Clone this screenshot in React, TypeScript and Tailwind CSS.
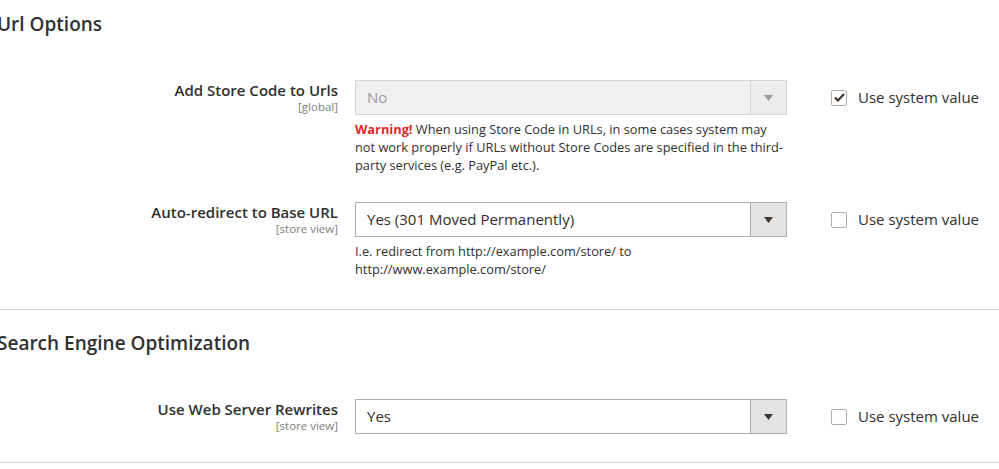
import React from "react";

type RowProps = {
  label: string;
  scope: string;
  value: string;
  disabled?: boolean;
  checked?: boolean;
  note?: React.ReactNode;
};

function Arrow({ muted }: { muted?: boolean }) {
  return (
    <svg width="9" height="6" viewBox="0 0 9 6">
      <path d="M0 0H9L4.5 6Z" fill={muted ? "#9a9a9a" : "#41362f"} />
    </svg>
  );
}

function Row({ label, scope, value, disabled, checked, note }: RowProps) {
  return (
    <div className="flex items-start">
      <div className="w-[338px] shrink-0 text-right">
        <div className="text-[15px] leading-[20px] font-semibold text-[#303030]">{label}</div>
        <div className="text-[11.5px] leading-[13px] text-[#808080]">{scope}</div>
      </div>
      <div className="ml-[17px] w-[432px] shrink-0">
        <div
          className={
            disabled
              ? "flex h-[35px] border border-[#d6d6d6] bg-[#f0f0f0]"
              : "flex h-[35px] border border-[#adadad] bg-white"
          }
        >
          <div
            className={
              disabled
                ? "flex flex-1 items-center pl-[11px] text-[15px] text-[#9a9a9a]"
                : "flex flex-1 items-center pl-[11px] text-[15px] text-[#303030]"
            }
          >
            {value}
          </div>
          <div
            className={
              disabled
                ? "flex w-[36px] items-center justify-center border-l border-[#d6d6d6] bg-[#ececec]"
                : "flex w-[36px] items-center justify-center border-l border-[#adadad] bg-[#e3e3e3]"
            }
          >
            <Arrow muted={disabled} />
          </div>
        </div>
        {note && <div className="mt-[5px] text-[12.8px] leading-[18px] text-[#303030]">{note}</div>}
      </div>
      <label className="ml-[44px] flex h-[35px] items-center gap-[11px] text-[15px] text-[#303030]">
        <span className="flex h-[16px] w-[16px] items-center justify-center rounded-[2px] border border-[#adadad] bg-white">
          {checked && (
            <svg width="11" height="9" viewBox="0 0 11 9">
              <path d="M1 4.5L4 7.5L10 1" fill="none" stroke="#41362f" strokeWidth="2.2" />
            </svg>
          )}
        </span>
        Use system value
      </label>
    </div>
  );
}

export default function App() {
  return (
    <div className="h-[469px] w-[999px] overflow-hidden bg-white font-['Open_Sans',sans-serif] text-[#303030]">
      <section className="border-b border-[#d1d1d1] pb-[31px]">
        <h2 className="ml-[-3px] pt-[10px] text-[19px] leading-[28px] font-semibold">Url Options</h2>
        <div className="mt-[42px] flex flex-col gap-[28px]">
          <Row
            label="Add Store Code to Urls"
            scope="[global]"
            value="No"
            disabled
            checked
            note={
              <>
                <span className="font-bold text-[#e22626]">Warning!</span> When using Store Code in URLs, in some
                cases system may not work properly if URLs without Store Codes are specified in the third-party
                services (e.g. PayPal etc.).
              </>
            }
          />
          <Row
            label="Auto-redirect to Base URL"
            scope="[store view]"
            value="Yes (301 Moved Permanently)"
            note={
              <>
                I.e. redirect from http://example.com/store/ to
                <br />
                http://www.example.com/store/
              </>
            }
          />
        </div>
      </section>
      <section className="border-b border-[#d1d1d1] pb-[28px]">
        <h2 className="ml-[-3px] pt-[19px] text-[19px] leading-[28px] font-semibold">Search Engine Optimization</h2>
        <div className="mt-[42px]">
          <Row label="Use Web Server Rewrites" scope="[store view]" value="Yes" />
        </div>
      </section>
    </div>
  );
}
